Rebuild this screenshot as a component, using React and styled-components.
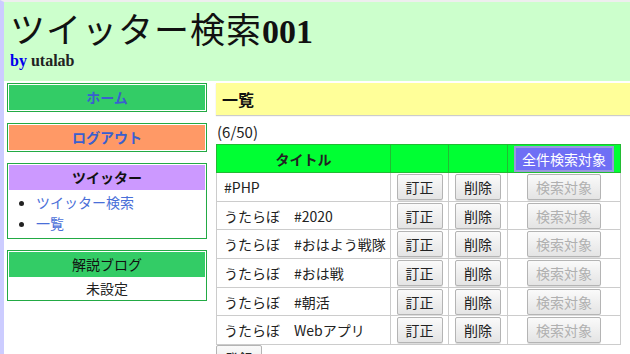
import styled, { createGlobalStyle } from 'styled-components';

const GlobalStyle = createGlobalStyle`
  html, body {
    margin: 0;
    padding: 0;
    background: #fff;
  }
  body {
    font-family: "Noto Sans CJK JP", "Noto Sans", sans-serif;
    font-size: 14px;
    color: #222;
  }
`;

const Page = styled.div`
  min-height: 354px;
  border-left: 4px solid #ccccff;
  border-top: 2px solid #eeeeee;
  box-sizing: border-box;
`;

const Header = styled.header`
  background: #ccffcc;
  height: 79px;
  padding-left: 6px;
  box-sizing: border-box;
`;

const Title = styled.h1`
  margin: 0;
  padding-top: 6px;
  font-size: 35px;
  line-height: 40px;
  font-weight: normal;
  font-family: "Noto Sans CJK JP", serif;
  letter-spacing: 1px;
  color: #111;
`;

const Num = styled.span`
  font-family: "Liberation Serif", serif;
  font-weight: bold;
  font-size: 34px;
  letter-spacing: 0;
`;

const Byline = styled.div`
  font-family: "Liberation Serif", serif;
  font-weight: bold;
  font-size: 16px;
  line-height: 18px;
  color: #222;
`;

const By = styled.span`
  color: #0000ee;
`;

const Body = styled.div`
  display: flex;
  align-items: flex-start;
  gap: 9px;
  padding-left: 3px;
`;

const Sidebar = styled.aside`
  width: 200px;
  display: flex;
  flex-direction: column;
  gap: 11px;
  padding-top: 2px;
`;

const Box = styled.div`
  border: 1px solid #22aa44;
  padding: 1px;
  background: #fff;
`;

const NavButton = styled.div`
  background: ${p => p.$bg};
  height: 25px;
  line-height: 25px;
  text-align: center;
  font-weight: bold;
  font-size: 14px;
  color: #3a5fcf;
`;

const BoxHead = styled.div`
  background: ${p => p.$bg};
  height: 25px;
  line-height: 25px;
  text-align: center;
  font-weight: ${p => (p.$bold ? 'bold' : 'normal')};
  color: #111;
`;

const LinkList = styled.ul`
  margin: 0;
  padding: 2px 0 3px 27px;
  li {
    line-height: 21px;
  }
  a {
    color: #4a6fd8;
    text-decoration: none;
  }
`;

const BoxText = styled.div`
  text-align: center;
  line-height: 22px;
  color: #222;
`;

const Main = styled.main`
  flex: 1;
  padding-top: 2px;
`;

const SectionHead = styled.h2`
  margin: 0;
  background: #ffff99;
  height: 32px;
  line-height: 32px;
  padding-left: 6px;
  font-size: 16px;
  font-weight: bold;
  color: #111;
  box-shadow: 0 1px 1px #ccc;
`;

const Count = styled.div`
  margin-top: 7px;
  line-height: 20px;
  padding-left: 1px;
  font-size: 15px;
`;

const Table = styled.table`
  border-collapse: collapse;
  width: 405px;
  margin-top: 2px;
  th {
    background: #00ff33;
    border: 1px solid #22bb33;
    height: 27px;
    padding: 0;
    font-weight: bold;
  }
  td {
    border: 1px solid #cccccc;
    height: 27.7px;
    padding: 0;
  }
`;

const TitleCell = styled.td`
  padding-left: 7px !important;
  width: 166px;
  white-space: nowrap;
`;

const BtnCell = styled.td`
  text-align: center;
  width: ${p => p.$w}px;
`;

const Button = styled.button`
  font-family: "Noto Sans CJK JP", sans-serif;
  font-size: 14px;
  height: 26px;
  padding: 0 8px;
  border: 1px solid #b4b4b4;
  border-radius: 2px;
  background: linear-gradient(#fafafa, #e4e4e4);
  color: ${p => (p.disabled ? '#b0b0b0' : '#222')};
  box-shadow: 0 1px 0 #ddd;
  vertical-align: middle;
`;

const AllButton = styled.button`
  font-family: "Noto Sans CJK JP", sans-serif;
  font-size: 14px;
  height: 26px;
  padding: 0 6px;
  border: 2px solid #9999dd;
  background: #6f6ff5;
  color: #fff;
  vertical-align: middle;
`;

const rows = [
  '#PHP',
  'うたらぼ　#2020',
  'うたらぼ　#おはよう戦隊',
  'うたらぼ　#おは戦',
  'うたらぼ　#朝活',
  'うたらぼ　Webアプリ',
];

export default function App() {
  return (
    <>
      <GlobalStyle />
      <Page>
        <Header>
          <Title>
            ツイッター検索<Num>001</Num>
          </Title>
          <Byline>
            <By>by</By> utalab
          </Byline>
        </Header>
        <Body>
          <Sidebar>
            <Box>
              <NavButton $bg="#33cc66">ホーム</NavButton>
            </Box>
            <Box>
              <NavButton $bg="#ff9966">ログアウト</NavButton>
            </Box>
            <Box>
              <BoxHead $bg="#cc99ff" $bold>ツイッター</BoxHead>
              <LinkList>
                <li><a href="#">ツイッター検索</a></li>
                <li><a href="#">一覧</a></li>
              </LinkList>
            </Box>
            <Box>
              <BoxHead $bg="#33cc66">解説ブログ</BoxHead>
              <BoxText>未設定</BoxText>
            </Box>
          </Sidebar>
          <Main>
            <SectionHead>一覧</SectionHead>
            <Count>(6/50)</Count>
            <Table>
              <thead>
                <tr>
                  <th>タイトル</th>
                  <th></th>
                  <th></th>
                  <th>
                    <AllButton>全件検索対象</AllButton>
                  </th>
                </tr>
              </thead>
              <tbody>
                {rows.map(r => (
                  <tr key={r}>
                    <TitleCell>{r}</TitleCell>
                    <BtnCell $w={57}><Button>訂正</Button></BtnCell>
                    <BtnCell $w={58}><Button>削除</Button></BtnCell>
                    <BtnCell><Button disabled>検索対象</Button></BtnCell>
                  </tr>
                ))}
              </tbody>
            </Table>
            <Button>登録</Button>
          </Main>
        </Body>
      </Page>
    </>
  );
}
